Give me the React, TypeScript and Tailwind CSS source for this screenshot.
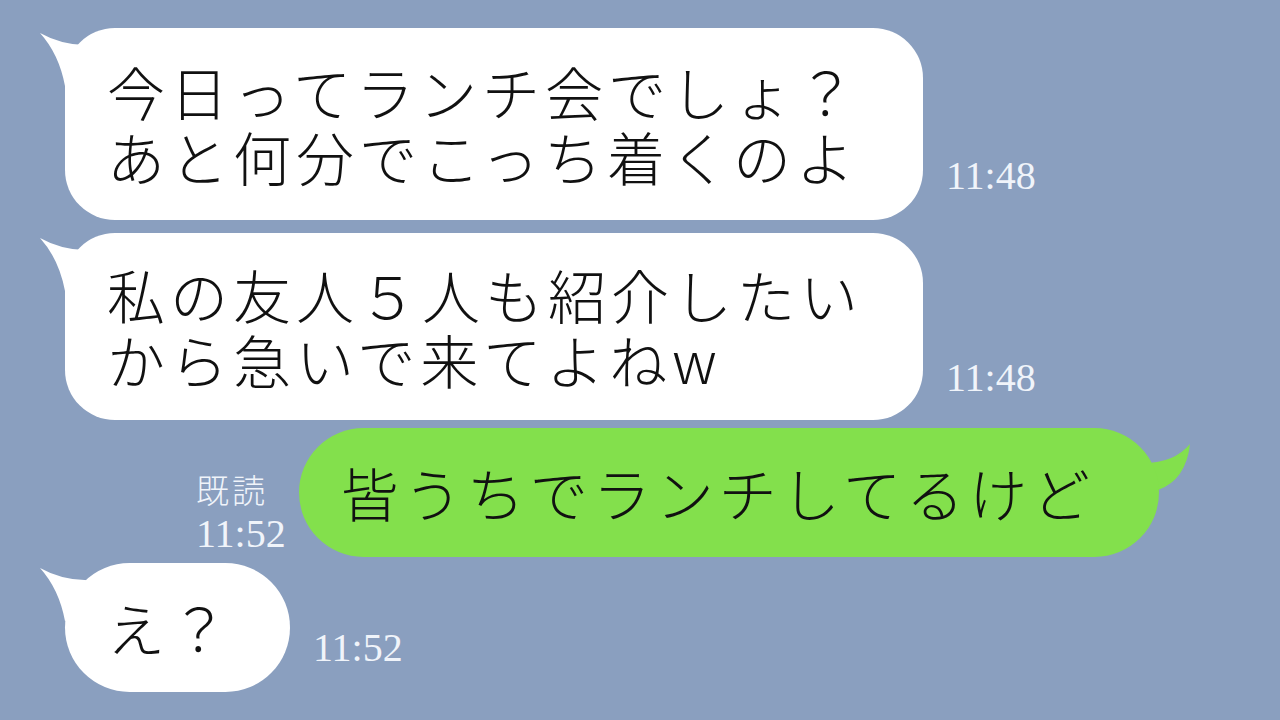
import React from "react";

const jp = { fontFamily: '"Noto Sans CJK JP", "Noto Sans", sans-serif' };
const serif = { fontFamily: '"Liberation Serif", "DejaVu Serif", serif' };

function LeftTail() {
  return (
    <svg
      className="absolute left-[-30px] top-0"
      width="80"
      height="70"
      viewBox="0 0 80 70"
    >
      <path d="M5 5 Q30 19 60 17 L75 40 L30 58 Q24 26 5 5 Z" fill="#ffffff" />
    </svg>
  );
}

function RightTail() {
  return (
    <svg
      className="absolute left-[830px] top-0"
      width="70"
      height="80"
      viewBox="0 0 70 80"
    >
      <path d="M15 35 Q45 35 61 16 Q57 52 29 62 L5 62 Z" fill="#83e04c" />
    </svg>
  );
}

function Time({ t, className = "" }: { t: string; className?: string }) {
  return (
    <div
      className={`text-[40px] leading-none text-[#f0f4fa] font-light ${className}`}
      style={serif}
    >
      {t}
    </div>
  );
}

const msg = "text-[58px] leading-[65px] tracking-[5px] text-[#111] font-light";

export default function App() {
  return (
    <div className="w-[1280px] h-[720px] bg-[#8a9fbf] overflow-hidden pt-[28px]" style={jp}>
      {/* Row 1 */}
      <div className="flex items-end pl-[65px]">
        <div className="relative">
          <LeftTail />
          <div className="relative w-[858px] h-[192px] bg-white rounded-[50px] flex items-center pl-[42px]">
            <div className={msg}>
              <div>今日ってランチ会でしょ？</div>
              <div>あと何分でこっち着くのよ</div>
            </div>
          </div>
        </div>
        <Time t="11:48" className="ml-[23px] mb-[24px]" />
      </div>

      {/* Row 2 */}
      <div className="flex items-end pl-[65px] mt-[13px]">
        <div className="relative">
          <LeftTail />
          <div className="relative w-[858px] h-[187px] bg-white rounded-[50px] flex items-center pl-[42px]">
            <div className={msg}>
              <div>私の友人５人も紹介したい</div>
              <div>から急いで来てよねw</div>
            </div>
          </div>
        </div>
        <Time t="11:48" className="ml-[23px] mb-[22px]" />
      </div>

      {/* Row 3 */}
      <div className="flex items-end pl-[196px] mt-[8px]">
        <div className="flex flex-col mb-[3px] mr-[13px]">
          <div className="text-[33px] leading-none tracking-[3px] text-[#f0f4fa] font-light mb-[8px]">
            既読
          </div>
          <Time t="11:52" />
        </div>
        <div className="relative">
          <RightTail />
          <div className="relative w-[860px] h-[129px] bg-[#83e04c] rounded-full flex items-center pl-[42px]">
            <div className={msg}>皆うちでランチしてるけど</div>
          </div>
        </div>
      </div>

      {/* Row 4 */}
      <div className="flex items-end pl-[65px] mt-[6px]">
        <div className="relative">
          <LeftTail />
          <div className="relative w-[225px] h-[129px] bg-white rounded-full flex items-center pl-[42px]">
            <div className={msg}>え？</div>
          </div>
        </div>
        <Time t="11:52" className="ml-[23px] mb-[24px]" />
      </div>
    </div>
  );
}
